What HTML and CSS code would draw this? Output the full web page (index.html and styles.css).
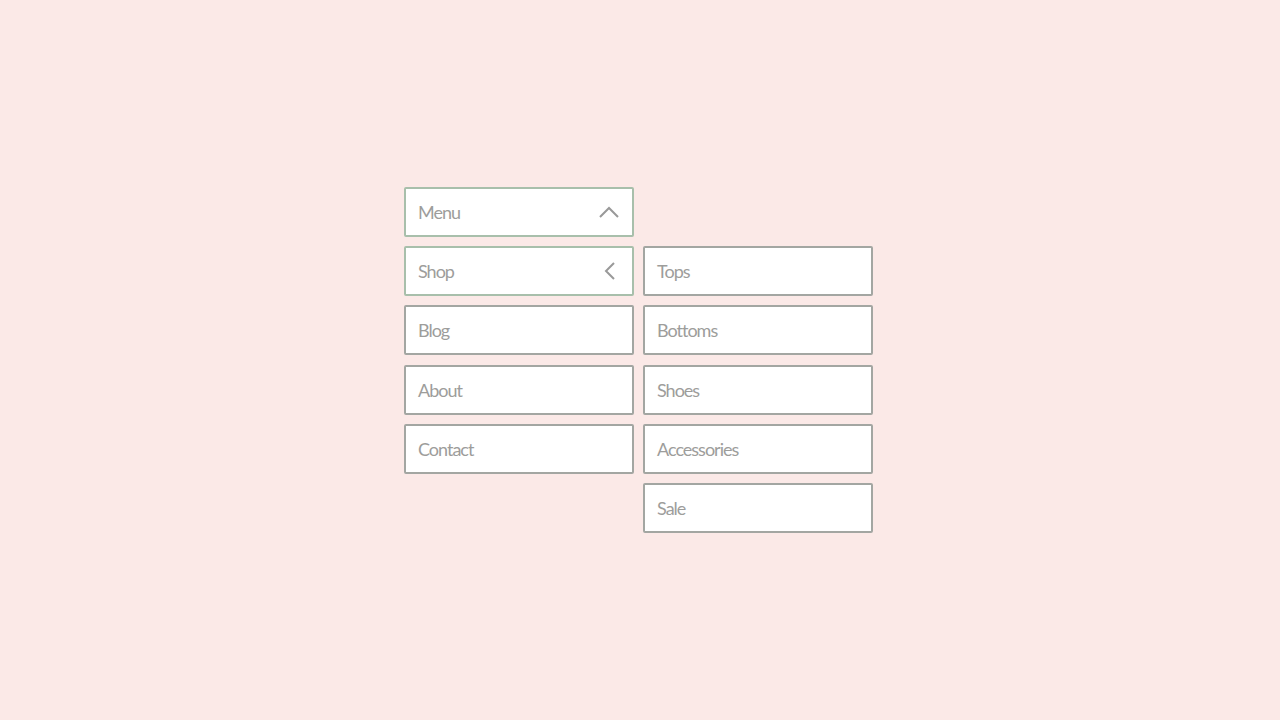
FILE: index.html
```html
<!DOCTYPE html>
<html lang="en">

<head>
  <meta charset="UTF-8" />
  <title>Menu</title>
  <link rel="stylesheet" href="styles.css">
</head>

<body>

  <nav class="nav">
    <ul class="col">
      <li class="item active">Menu
        <svg class="chev" width="20" height="12" viewBox="0 0 20 12"><path d="M1 11 L10 2 L19 11" /></svg>
      </li>
      <li class="item active">Shop
        <svg class="chev chev-left" width="12" height="18" viewBox="0 0 12 18"><path d="M10 1 L2 9 L10 17" /></svg>
      </li>
      <li class="item">Blog</li>
      <li class="item">About</li>
      <li class="item">Contact</li>
    </ul>

    <ul class="col sub">
      <li class="item">Tops</li>
      <li class="item">Bottoms</li>
      <li class="item">Shoes</li>
      <li class="item">Accessories</li>
      <li class="item">Sale</li>
    </ul>
  </nav>

</body>

</html>
```

FILE: styles.css
```css
body {
  margin: 0;
  height: 100vh;
  background: #fbe9e7;
  font-family: Lato, "Liberation Sans", sans-serif;
  display: flex;
  align-items: center;
  justify-content: center;
}

.nav {
  display: flex;
  align-items: flex-start;
  gap: 9px;
  margin-left: -3px;
}

.col {
  list-style: none;
  margin: 0;
  padding: 0;
  display: flex;
  flex-direction: column;
  gap: 9.4px;
}

.sub {
  margin-top: 59.4px;
}

.item {
  box-sizing: border-box;
  width: 230px;
  height: 50px;
  padding: 0 12px 0 13px;
  display: flex;
  align-items: center;
  justify-content: space-between;
  background: #fff;
  border: 2px solid #a3a6a2;
  border-radius: 2px;
  color: #9d9d9b;
  font-size: 18px;
  letter-spacing: -1px;
  text-indent: -1px;
}

.item.active {
  border-color: #a8bfab;
}

.chev {
  fill: none;
  stroke: #999;
  stroke-width: 2;
  margin-right: 1px;
}

.chev-left {
  margin-right: 4px;
}
```
